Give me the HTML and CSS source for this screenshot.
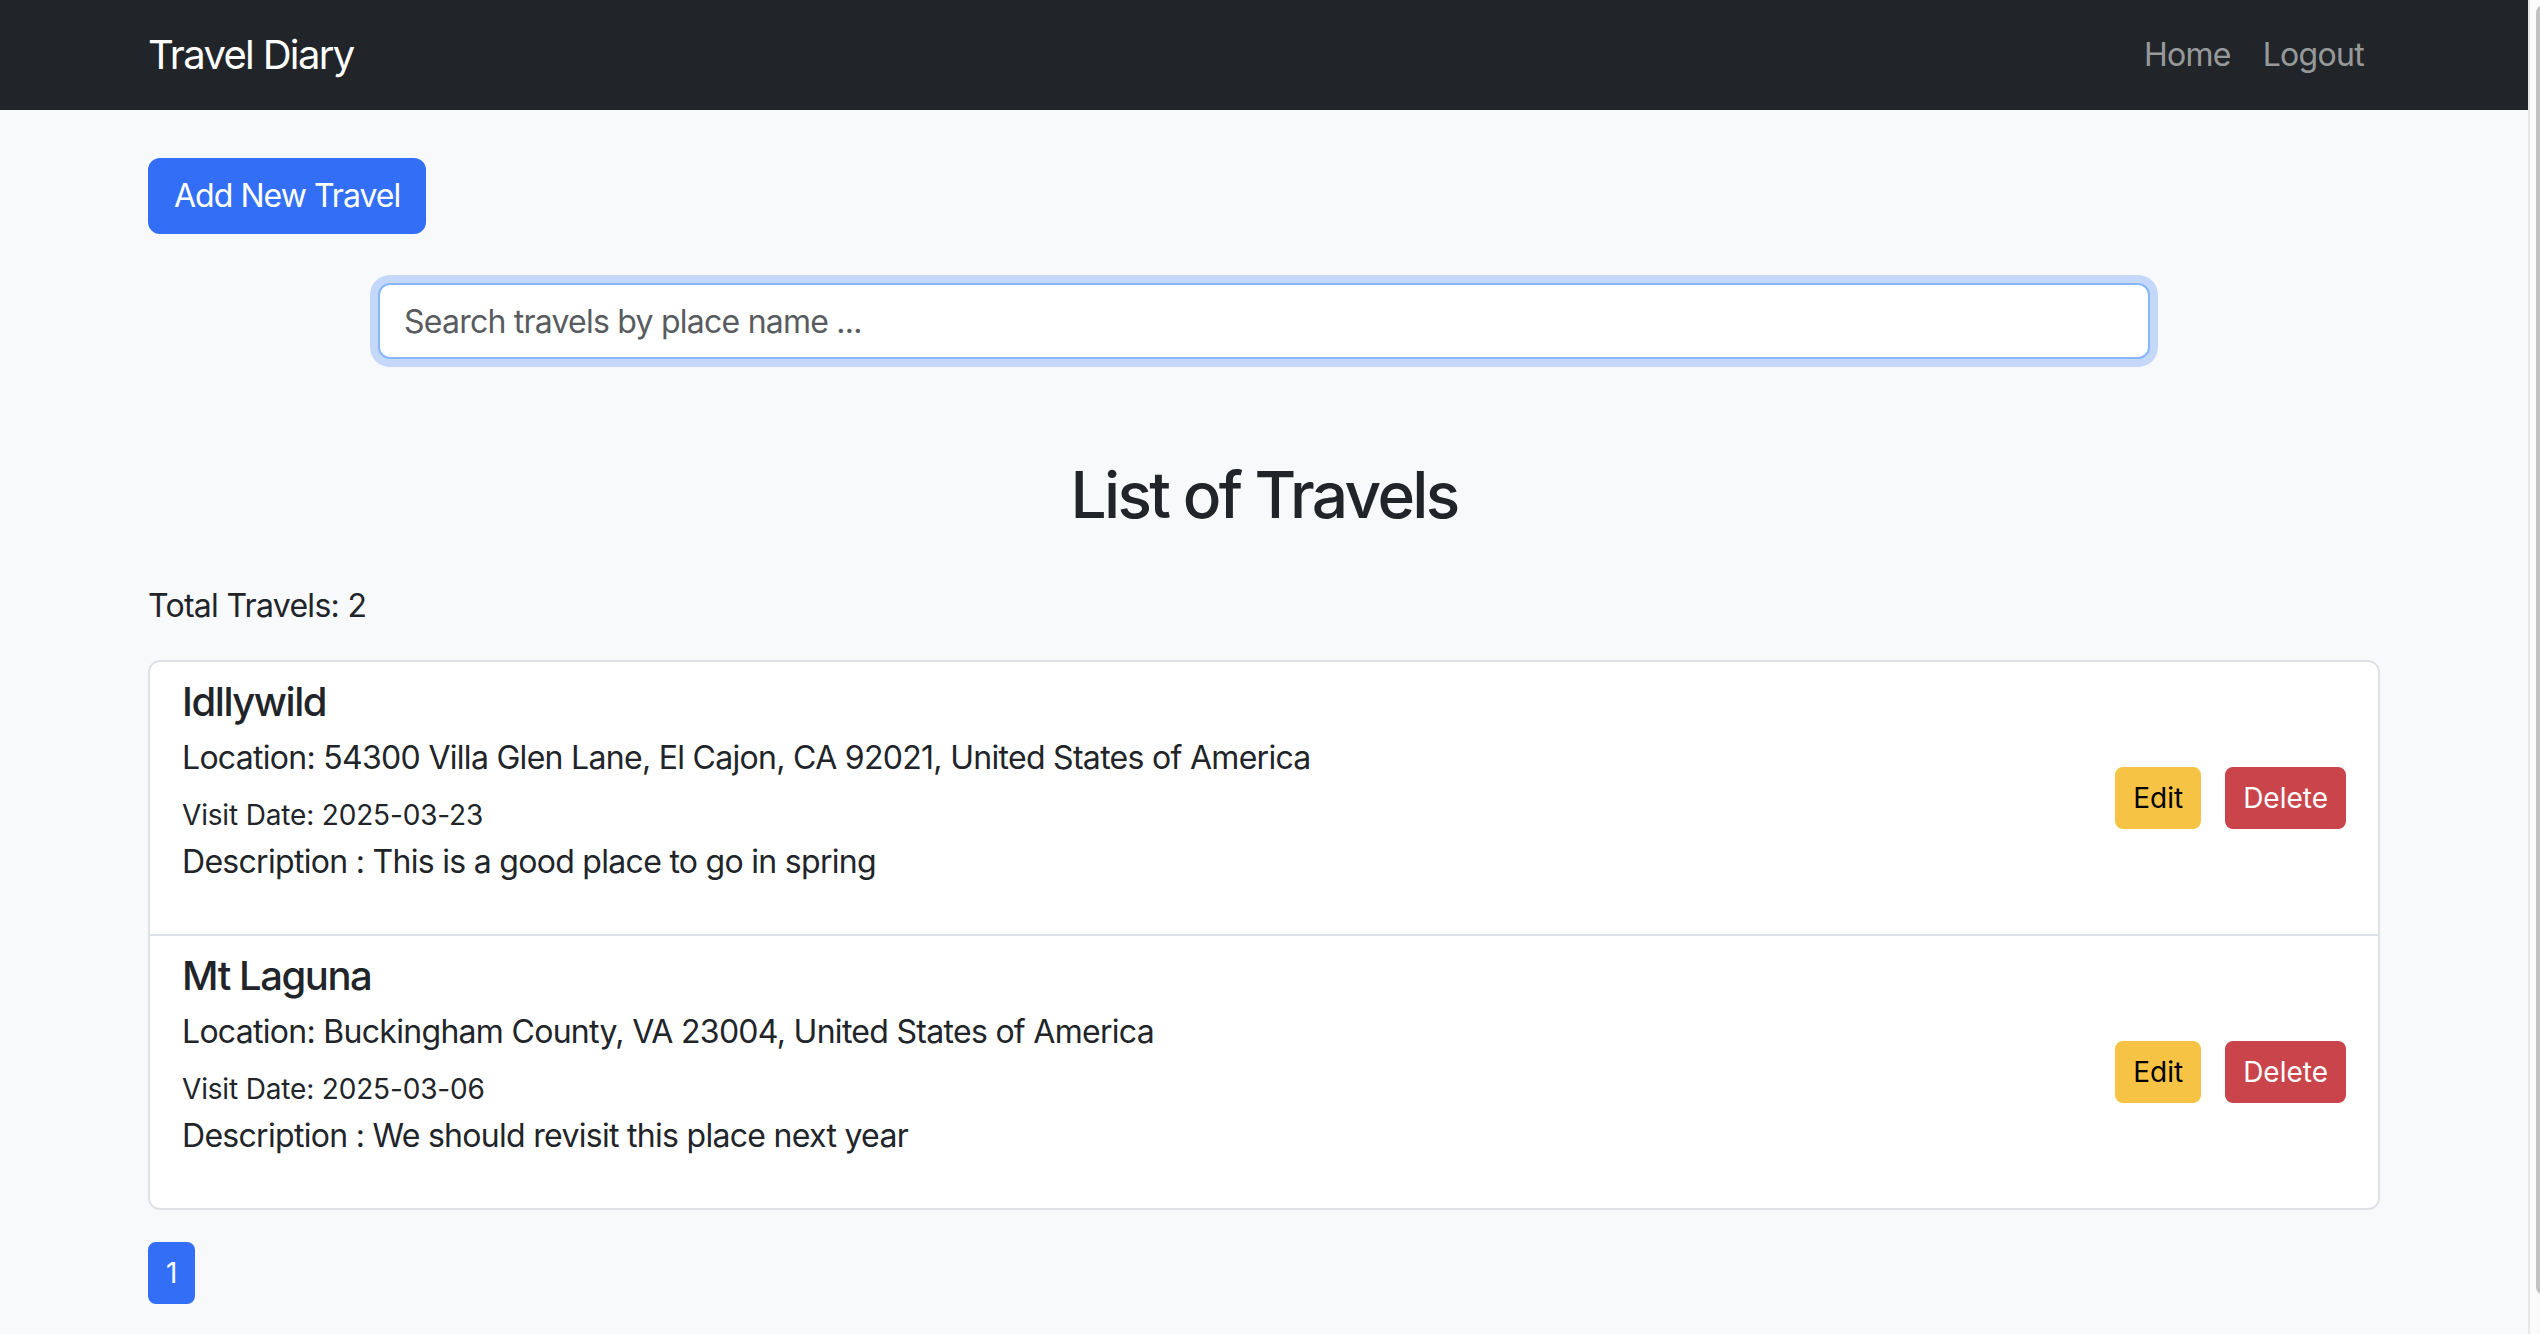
FILE: index.html
```html
<!DOCTYPE html>
<html lang="en">
<head>
<meta charset="utf-8">
<title>Travel Diary</title>
<link rel="stylesheet" href="styles.css">
</head>
<body>
<div class="page">
  <nav class="navbar">
    <div class="container nav-inner">
      <a class="brand" href="#">Travel Diary</a>
      <div class="nav-links">
        <a class="nav-link" href="#">Home</a>
        <a class="nav-link" href="#">Logout</a>
      </div>
    </div>
  </nav>
  <main class="container main">
    <button class="btn btn-primary add-btn">Add New Travel</button>
    <div class="search-wrap">
      <input class="search" type="text" placeholder="Search travels by place name ...">
    </div>
    <h2 class="heading">List of Travels</h2>
    <p class="total">Total Travels: 2</p>
    <ul class="list">
      <li class="item">
        <div class="info">
          <h5 class="title">Idllywild</h5>
          <p class="loc">Location: 54300 Villa Glen Lane, El Cajon, CA 92021, United States of America</p>
          <p class="date"><small>Visit Date: 2025-03-23</small></p>
          <p class="desc">Description : This is a good place to go in spring</p>
        </div>
        <div class="actions">
          <button class="btn-sm btn-warning">Edit</button>
          <button class="btn-sm btn-danger">Delete</button>
        </div>
      </li>
      <li class="item">
        <div class="info">
          <h5 class="title">Mt Laguna</h5>
          <p class="loc">Location: Buckingham County, VA 23004, United States of America</p>
          <p class="date"><small>Visit Date: 2025-03-06</small></p>
          <p class="desc">Description : We should revisit this place next year</p>
        </div>
        <div class="actions">
          <button class="btn-sm btn-warning">Edit</button>
          <button class="btn-sm btn-danger">Delete</button>
        </div>
      </li>
    </ul>
    <div class="pagination">
      <span class="page-link active">1</span>
    </div>
  </main>
</div>
<div class="scrollbar"><div class="thumb"></div></div>
</body>
</html>
```
FILE: styles.css
```css
* { box-sizing: border-box; }
html, body { margin: 0; padding: 0; height: 100%; overflow: hidden; }
body {
  display: flex;
  background: #f8f9fa;
  font-family: Inter, "Noto Sans", "Liberation Sans", sans-serif;
  font-size: 32px;
  line-height: 1.5;
  letter-spacing: -0.022em;
  color: #212529;
}
.page { flex: 1; min-width: 0; }
.container {
  max-width: 2280px;
  margin: 0 auto;
  padding: 0 24px;
}
.navbar { background: #212529; height: 110px; display: flex; align-items: center; }
.nav-inner { width: 100%; display: flex; justify-content: space-between; align-items: center; }
.brand {
  color: #fff;
  text-decoration: none;
  font-size: 40px;
  line-height: 60px;
  letter-spacing: -0.042em;
}
.nav-links { display: flex; }
.nav-link {
  color: rgba(255,255,255,0.55);
  text-decoration: none;
  padding: 16px 16px;
  line-height: 48px;
}
.main { padding-top: 48px; }
.btn {
  font-family: inherit;
  font-size: 32px;
  line-height: 48px;
  letter-spacing: -0.03em;
  padding: 12px 24px;
  border: 2px solid transparent;
  border-radius: 12px;
  cursor: pointer;
}
.btn-primary { background: #336ff6; color: #fff; border-color: #336ff6; }
.add-btn { display: block; margin-bottom: 49px; }
.search-wrap { display: flex; justify-content: center; }
.search {
  width: 1772px;
  height: 76px;
  font-family: inherit;
  font-size: 32px;
  letter-spacing: -0.024em;
  padding: 12px 24px;
  border: 2px solid #86b7fe;
  border-radius: 12px;
  background: #fff;
  color: #212529;
  outline: none;
  box-shadow: 0 0 0 8px #c5d8fa;
}
.search::placeholder { color: #595c5f; }
.heading {
  text-align: center;
  font-size: 64px;
  font-weight: 500;
  line-height: 1.2;
  letter-spacing: -0.042em;
  margin: 98px 0 48px;
}
.total { margin: 0 0 30px; }
.list {
  list-style: none;
  margin: 0;
  padding: 0;
  background: #fff;
  border: 2px solid #dee2e6;
  border-radius: 12px;
}
.item {
  display: flex;
  align-items: center;
  justify-content: space-between;
  padding: 16px 32px;
}
.item + .item { border-top: 2px solid #dee2e6; }
.title { font-size: 40px; font-weight: 500; line-height: 48px; letter-spacing: -0.036em; margin: 0 0 8px; }
.loc { margin: 0 0 8px; }
.date { margin: 0; }
.date small { font-size: 28px; letter-spacing: -0.006em; }
.desc { margin: 0 0 32px; }
.actions { display: flex; gap: 24px; }
.btn-sm {
  font-family: inherit;
  font-size: 28px;
  line-height: 42px;
  letter-spacing: 0;
  padding: 8px 16px;
  border: 2px solid transparent;
  border-radius: 8px;
}
.btn-warning { background: #f6c344; border-color: #f6c344; color: #000; }
.btn-danger { background: #ca444b; border-color: #ca444b; color: #fff; }
.pagination { display: flex; margin-top: 32px; }
.page-link {
  display: block;
  font-size: 28px;
  line-height: 42px;
  letter-spacing: 0;
  padding: 8px 16px;
  border: 2px solid #336ff6;
  border-radius: 8px;
  background: #336ff6;
  color: #fff;
}
.scrollbar {
  width: 12px;
  flex: none;
  background: #fafafa;
  border-left: 2px solid #e6e6e6;
  padding: 5px 0 0 6px;
  overflow: hidden;
}
.thumb {
  width: 16px;
  height: 1290px;
  background: #c2c2c2;
  border-radius: 8px;
}
```
